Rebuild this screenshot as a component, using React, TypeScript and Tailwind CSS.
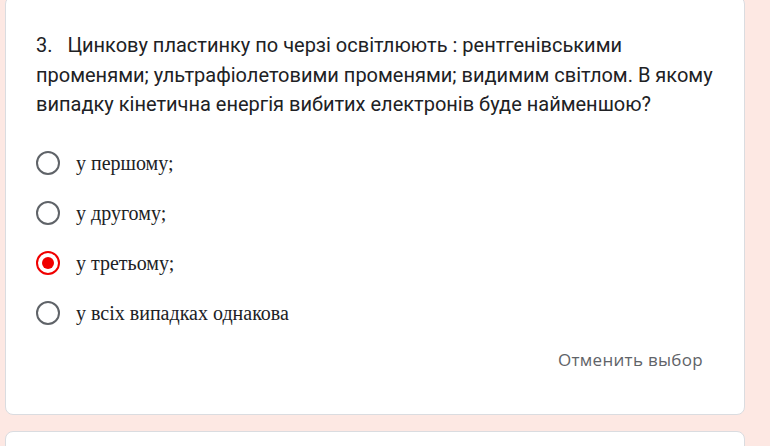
const options = [
  { label: "у першому;", checked: false },
  { label: "у другому;", checked: false },
  { label: "у третьому;", checked: true },
  { label: "у всіх випадках однакова", checked: false },
];

function Radio({ checked }: { checked: boolean }) {
  return (
    <div
      className={
        checked
          ? "w-[24px] h-[24px] rounded-full border-[2.5px] border-[#f00000] flex items-center justify-center"
          : "w-[24px] h-[24px] rounded-full border-[2.5px] border-[#5f6368]"
      }
    >
      {checked && <div className="w-[12px] h-[12px] rounded-full bg-[#f00000]" />}
    </div>
  );
}

export default function App() {
  return (
    <div className="h-[446px] w-[770px] bg-[#fde8e3] overflow-hidden">
      <div className="-mt-[4px] ml-[5px] w-[740px] bg-white border border-[#dadce0] rounded-lg pt-[34px] pl-[30px] pr-[20px] pb-[36px]">
        <div
          className="text-[20px] leading-[29.5px] text-[#202124]"
          style={{ fontFamily: "Roboto, sans-serif" }}
        >
          3.&nbsp;&nbsp; Цинкову пластинку по черзі освітлюють : рентгенівськими променями;
          ультрафіолетовими променями; видимим світлом. В якому випадку кінетична енергія
          вибитих електронів буде найменшою?
        </div>
        <div className="mt-[18px] flex flex-col">
          {options.map((o) => (
            <div key={o.label} className="h-[50px] flex items-center">
              <Radio checked={o.checked} />
              <span
                className="ml-[16px] text-[20px] text-[#202124]"
                style={{ fontFamily: '"Liberation Serif", serif' }}
              >
                {o.label}
              </span>
            </div>
          ))}
        </div>
        <div className="flex justify-end mt-[4px] pr-[13px]">
          <button
            className="h-9 px-2 text-[17px] text-[#5f6368] tracking-[0.3px]"
            style={{ fontFamily: '"Open Sans", sans-serif' }}
          >
            Отменить выбор
          </button>
        </div>
      </div>
      <div className="mt-[16px] ml-[5px] w-[740px] h-[40px] bg-white border border-[#dadce0] rounded-lg" />
    </div>
  );
}
